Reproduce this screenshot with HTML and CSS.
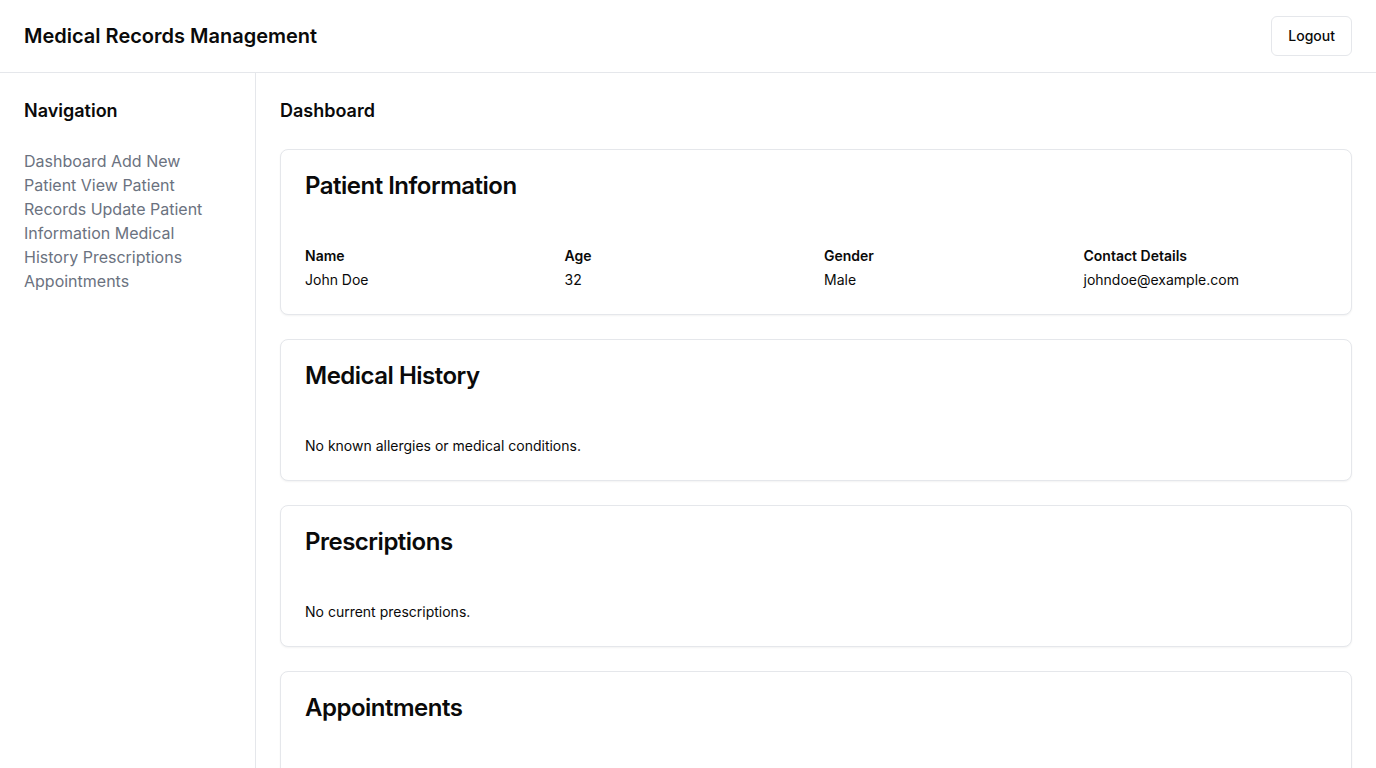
FILE: index.html
```html
<!DOCTYPE html>
<html lang="en">
<head>
<meta charset="utf-8">
<title>Medical Records Management</title>
<link rel="stylesheet" href="styles.css">
</head>
<body>
<header class="topbar">
  <h1 class="app-title">Medical Records Management</h1>
  <button class="btn-outline">Logout</button>
</header>
<div class="layout">
  <aside class="sidebar">
    <h2 class="side-title">Navigation</h2>
    <nav class="nav">
      <a href="#">Dashboard</a> <a href="#">Add New Patient</a> <a href="#">View Patient Records</a> <a href="#">Update Patient Information</a> <a href="#">Medical History</a> <a href="#">Prescriptions</a> <a href="#">Appointments</a>
    </nav>
  </aside>
  <main class="main">
    <h2 class="page-title">Dashboard</h2>
    <section class="card">
      <h3 class="card-title">Patient Information</h3>
      <div class="info-grid">
        <div><div class="label">Name</div><div class="value">John Doe</div></div>
        <div><div class="label">Age</div><div class="value">32</div></div>
        <div><div class="label">Gender</div><div class="value">Male</div></div>
        <div><div class="label">Contact Details</div><div class="value">johndoe@example.com</div></div>
      </div>
    </section>
    <section class="card">
      <h3 class="card-title">Medical History</h3>
      <p class="text">No known allergies or medical conditions.</p>
    </section>
    <section class="card">
      <h3 class="card-title">Prescriptions</h3>
      <p class="text">No current prescriptions.</p>
    </section>
    <section class="card">
      <h3 class="card-title">Appointments</h3>
      <p class="text">No upcoming appointments.</p>
    </section>
  </main>
</div>
</body>
</html>
```
FILE: styles.css
```css
* { box-sizing: border-box; }
html, body { margin: 0; padding: 0; }
body {
  font-family: Inter, "Noto Sans", sans-serif;
  color: #0a0a0a;
  background: #ffffff;
}
.topbar {
  height: 73px;
  display: flex;
  align-items: center;
  justify-content: space-between;
  padding: 0 24px;
  border-bottom: 1px solid #e5e7eb;
}
.app-title {
  margin: 0;
  font-size: 20px;
  line-height: 28px;
  font-weight: 600;
}
.btn-outline {
  height: 40px;
  padding: 0 16px;
  font-family: inherit;
  font-size: 14px;
  line-height: 20px;
  font-weight: 500;
  color: #0a0a0a;
  background: #ffffff;
  border: 1px solid #e5e7eb;
  border-radius: 6px;
  cursor: pointer;
  margin-top: -1px;
}
.layout {
  display: flex;
  min-height: calc(100vh - 73px);
}
.sidebar {
  width: 256px;
  flex: none;
  border-right: 1px solid #e5e7eb;
  padding: 24px;
}
.side-title, .page-title {
  margin: 0;
  font-size: 18px;
  line-height: 28px;
  font-weight: 600;
}
.side-title { margin-bottom: 24px; }
.nav {
  font-size: 16px;
  line-height: 24px;
}
.nav a {
  color: #6b7280;
  text-decoration: none;
}
.main {
  flex: 1;
  padding: 24px;
  display: flex;
  flex-direction: column;
  gap: 24px;
}
.card {
  border: 1px solid #e5e7eb;
  border-radius: 8px;
  background: #ffffff;
  box-shadow: 0 1px 2px rgba(0,0,0,0.05);
  padding: 24px;
}
.card-title {
  margin: 0 0 48px;
  font-size: 24px;
  line-height: 24px;
  font-weight: 600;
  letter-spacing: -0.5px;
}
.info-grid {
  display: grid;
  grid-template-columns: repeat(4, 1fr);
  gap: 16px;
}
.label {
  font-size: 14px;
  line-height: 20px;
  font-weight: 600;
  margin-bottom: 4px;
}
.value, .text {
  font-size: 14px;
  line-height: 20px;
}
.text { margin: 0; }
```
